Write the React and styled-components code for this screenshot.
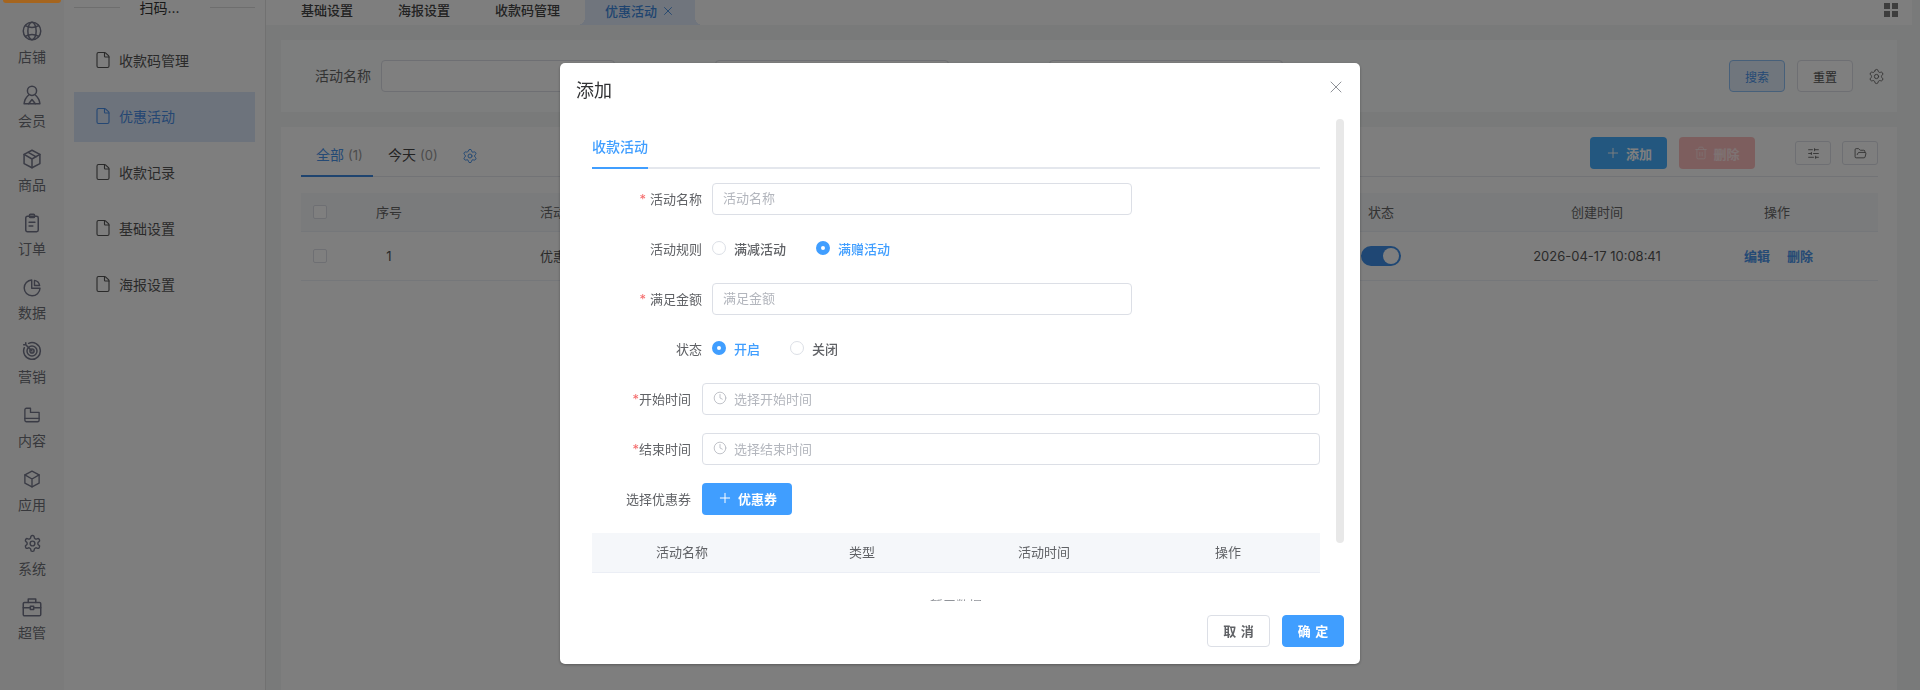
import styled, { createGlobalStyle } from 'styled-components';
import { File, Plus, X, Clock, Settings, Trash2, SlidersHorizontal, FolderOpen } from 'lucide-react';

const GlobalStyle = createGlobalStyle`
	html, body {
		margin: 0;
		padding: 0;
		height: 100%;
		overflow: hidden;
		background: #f2f4f4;
		font-family: Inter, "Noto Sans CJK SC", sans-serif;
		font-size: 13px;
		color: #606266;
	}
	* {
		box-sizing: border-box;
	}
`;

const Line = ({ size = 20, children }) => (
	<svg width={size} height={size} viewBox="0 0 24 24" fill="none" stroke="currentColor" strokeWidth="1.8" strokeLinecap="round" strokeLinejoin="round">
		{children}
	</svg>
);

const railItems = [
	{
		label: '店铺',
		icon: (
			<>
				<circle cx="12" cy="12" r="10.5" />
				<ellipse cx="12" cy="12" rx="5" ry="10.5" />
				<path d="M4 5.5Q12 10 20 5.5M4 18.5Q12 14 20 18.5" />
			</>
		),
	},
	{
		label: '会员',
		icon: (
			<>
				<circle cx="12" cy="7" r="5.5" />
				<path d="M8 12C5 14.5 3 18 2.5 22.5H21.5C21 18 19 14.5 16 12" />
				<path d="M8 22.5 12 17.5 16 22.5" />
			</>
		),
	},
	{
		label: '商品',
		icon: (
			<>
				<path d="M12 1.5 21.5 6.5V17.5L12 22.5 2.5 17.5V6.5Z" />
				<path d="M2.5 6.5 12 12 21.5 6.5M12 12V22.5M7.5 4 17 9.5" />
			</>
		),
	},
	{
		label: '订单',
		icon: (
			<>
				<rect x="4.5" y="4" width="15" height="18.5" rx="2" />
				<rect x="9" y="1.5" width="6" height="4" rx="1" />
				<path d="M8.5 11H15.5M8.5 15.5H13" />
			</>
		),
	},
	{
		label: '数据',
		size: 19,
		icon: (
			<>
				<path d="M11 2.5A10 10 0 1 0 21.5 13H11Z" />
				<path d="M14.5 3A8 8 0 0 1 21 9.5H14.5Z" />
			</>
		),
	},
	{
		label: '营销',
		icon: (
			<>
				<path d="M8 2.8A10 10 0 1 1 2.8 8" />
				<circle cx="12" cy="12" r="6" />
				<circle cx="12" cy="12" r="2.5" />
				<path d="M12 12 4.5 4.5M2 4.5H4.5V2" />
			</>
		),
	},
	{
		label: '内容',
		size: 18,
		icon: (
			<>
				<path d="M2.5 5A2 2 0 0 1 4.5 3H10V8.5H21.5V19A2 2 0 0 1 19.5 21H4.5A2 2 0 0 1 2.5 19Z" />
				<path d="M2.5 16.5H21.5" />
			</>
		),
	},
	{
		label: '应用',
		size: 18,
		icon: (
			<>
				<path d="M12 1.5 21.5 6.5V17.5L12 22.5 2.5 17.5V6.5Z" />
				<path d="M2.5 6.5 12 12 21.5 6.5M12 12V22.5" />
			</>
		),
	},
	{
		label: '系统',
		size: 19,
		icon: (
			<>
				<path d="M12.2 2h-.4a2 2 0 0 0-2 2v.2a2 2 0 0 1-1 1.7l-.4.3a2 2 0 0 1-2 0l-.2-.1a2 2 0 0 0-2.7.7l-.2.4a2 2 0 0 0 .7 2.7l.2.1a2 2 0 0 1 1 1.7v.5a2 2 0 0 1-1 1.7l-.2.1a2 2 0 0 0-.7 2.7l.2.4a2 2 0 0 0 2.7.7l.2-.1a2 2 0 0 1 2 0l.4.3a2 2 0 0 1 1 1.7v.2a2 2 0 0 0 2 2h.4a2 2 0 0 0 2-2v-.2a2 2 0 0 1 1-1.7l.4-.3a2 2 0 0 1 2 0l.2.1a2 2 0 0 0 2.7-.7l.2-.4a2 2 0 0 0-.7-2.7l-.2-.1a2 2 0 0 1-1-1.7v-.5a2 2 0 0 1 1-1.7l.2-.1a2 2 0 0 0 .7-2.7l-.2-.4a2 2 0 0 0-2.7-.7l-.2.1a2 2 0 0 1-2 0l-.4-.3a2 2 0 0 1-1-1.7V4a2 2 0 0 0-2-2Z" />
				<circle cx="12" cy="12" r="3" />
			</>
		),
	},
	{
		label: '超管',
		icon: (
			<>
				<rect x="1.5" y="6.5" width="21" height="16" rx="1.5" />
				<path d="M7.5 6.5V2.5H16.5V6.5M1.5 13H10M14 13H22.5" />
				<rect x="10" y="11" width="4" height="4" />
			</>
		),
	},
];

const menuItems = ['收款码管理', '优惠活动', '收款记录', '基础设置', '海报设置'];
const topTabs = ['基础设置', '海报设置', '收款码管理'];

export default function App() {
	return (
		<>
			<GlobalStyle />
			<Page>
				<Rail>
					<BrandPill />
					{railItems.map((item) => (
						<RailItem key={item.label}>
							<RailIcon>
								<Line size={item.size}>{item.icon}</Line>
							</RailIcon>
							{item.label}
						</RailItem>
					))}
				</Rail>
				<Sidebar>
					<SideHead>
						<SideRule />
						<SideTitle>扫码...</SideTitle>
						<SideRule />
					</SideHead>
					{menuItems.map((name) => (
						<MenuItem key={name} $active={name === '优惠活动'}>
							<File size={18} strokeWidth={1.5} />
							{name}
						</MenuItem>
					))}
				</Sidebar>
				<Main>
					<TabBar>
						{topTabs.map((name) => (
							<TopTab key={name}>{name}</TopTab>
						))}
						<ActiveTopTab>
							优惠活动
							<X size={14} strokeWidth={1.5} />
						</ActiveTopTab>
						<GridIcon width="14" height="14" viewBox="0 0 14 14" fill="currentColor">
							<rect x="0" y="0" width="6" height="6" />
							<rect x="8" y="0" width="6" height="6" />
							<rect x="0" y="8" width="6" height="6" />
							<rect x="8" y="8" width="6" height="6" />
						</GridIcon>
					</TabBar>

					<SearchPanel>
						<Filter>
							<FilterLabel>活动名称</FilterLabel>
							<FilterInput />
						</Filter>
						<Filter>
							<FilterLabel>活动规则</FilterLabel>
							<FilterInput />
						</Filter>
						<Filter>
							<FilterLabel>活动状态</FilterLabel>
							<FilterInput />
						</Filter>
						<SearchActions>
							<OutlineButton $primary>搜索</OutlineButton>
							<OutlineButton>重置</OutlineButton>
							<GearWrap>
								<Settings size={17} strokeWidth={1.3} />
							</GearWrap>
						</SearchActions>
					</SearchPanel>

					<ListPanel>
						<ListHead>
							<ListTab $active>
								全部 <Count>(1)</Count>
							</ListTab>
							<ListTab>
								今天 <Count>(0)</Count>
							</ListTab>
							<BlueGear>
								<Settings size={16} strokeWidth={1.5} />
							</BlueGear>
							<ListActions>
								<AddButton>
									<Plus size={16} strokeWidth={1.4} />
									添加
								</AddButton>
								<DeleteButton>
									<Trash2 size={14} strokeWidth={1.3} />
									删除
								</DeleteButton>
								<ToolButton>
									<SlidersHorizontal size={13} strokeWidth={1.5} />
								</ToolButton>
								<ToolButton>
									<FolderOpen size={13} strokeWidth={1.5} />
								</ToolButton>
							</ListActions>
						</ListHead>
						<TableHead>
							<CheckCell>
								<Checkbox />
							</CheckCell>
							<Cell>序号</Cell>
							<NameCell>活动名称</NameCell>
							<Cell>状态</Cell>
							<Cell>创建时间</Cell>
							<Cell>操作</Cell>
						</TableHead>
						<TableRow>
							<CheckCell>
								<Checkbox />
							</CheckCell>
							<Cell>1</Cell>
							<NameCell>优惠活动</NameCell>
							<Cell>
								<Switch />
							</Cell>
							<Cell>2026-04-17 10:08:41</Cell>
							<LinkCell>
								<RowLink>编辑</RowLink>
								<RowLink>删除</RowLink>
							</LinkCell>
						</TableRow>
					</ListPanel>
				</Main>

				<Overlay>
					<Modal>
						<ModalHeader>
							<ModalTitle>添加</ModalTitle>
							<CloseIcon size={20} strokeWidth={1.2} />
						</ModalHeader>
						<ModalBody>
							<FormTabs>
								<FormTab>收款活动</FormTab>
							</FormTabs>
							<Form>
								<Row>
									<Label>
										<Star $spaced>*</Star>活动名称
									</Label>
									<TextInput placeholder="活动名称" />
								</Row>
								<Row>
									<Label>活动规则</Label>
									<Radios>
										<RadioItem>
											<Radio />
											满减活动
										</RadioItem>
										<RadioItem $checked>
											<Radio $checked />
											满赠活动
										</RadioItem>
									</Radios>
								</Row>
								<Row>
									<Label>
										<Star $spaced>*</Star>满足金额
									</Label>
									<TextInput placeholder="满足金额" />
								</Row>
								<Row>
									<Label>状态</Label>
									<Radios>
										<RadioItem $checked>
											<Radio $checked />
											开启
										</RadioItem>
										<RadioItem>
											<Radio />
											关闭
										</RadioItem>
									</Radios>
								</Row>
								<Row>
									<ShortLabel>
										<Star>*</Star>开始时间
									</ShortLabel>
									<TimeInput>
										<Clock size={14} strokeWidth={1.4} />
										选择开始时间
									</TimeInput>
								</Row>
								<Row>
									<ShortLabel>
										<Star>*</Star>结束时间
									</ShortLabel>
									<TimeInput>
										<Clock size={14} strokeWidth={1.4} />
										选择结束时间
									</TimeInput>
								</Row>
								<Row>
									<ShortLabel>选择优惠券</ShortLabel>
									<CouponButton>
										<Plus size={16} strokeWidth={1.5} />
										优惠券
									</CouponButton>
								</Row>
							</Form>
							<CouponHead>
								<div>活动名称</div>
								<div>类型</div>
								<div>活动时间</div>
								<div>操作</div>
							</CouponHead>
							<Empty>暂无数据</Empty>
							<ScrollThumb />
						</ModalBody>
						<ModalFooter>
							<CancelButton>取 消</CancelButton>
							<ConfirmButton>确 定</ConfirmButton>
						</ModalFooter>
					</Modal>
				</Overlay>
			</Page>
		</>
	);
}

const Page = styled.div`
	display: flex;
	width: 1920px;
	height: 690px;
	overflow: hidden;
`;

const Rail = styled.nav`
	flex: 0 0 64px;
	background: #f7f7f7;
	display: flex;
	flex-direction: column;
	align-items: center;
`;
const BrandPill = styled.div`
	width: 58px;
	height: 3px;
	margin-bottom: 18px;
	background: #a5651f;
	border-radius: 0 0 12px 12px;
	position: relative;
	z-index: 20;
`;
const RailItem = styled.div`
	height: 64px;
	display: flex;
	flex-direction: column;
	align-items: center;
	gap: 7px;
	line-height: 18px;
	font-size: 14px;
	color: #6f7178;
`;
const RailIcon = styled.div`
	height: 20px;
	display: flex;
	align-items: center;
	color: #74778a;
`;

const Sidebar = styled.aside`
	flex: 0 0 202px;
	background: #fcfcfc;
	border-right: 1px solid #e2e2e2;
	padding: 0 10px;
`;
const SideHead = styled.div`
	display: flex;
	align-items: center;
	height: 16px;
	margin-bottom: 20px;
`;
const SideRule = styled.div`
	flex: 1;
	height: 1px;
	margin-top: -2px;
	background: #dcdcdc;
`;
const SideTitle = styled.div`
	flex: 0 0 90px;
	padding-left: 20px;
	font-size: 14px;
	line-height: 16px;
	color: #333;
`;
const MenuItem = styled.div`
	height: 50px;
	margin-bottom: 6px;
	padding: 0 0 2px 20px;
	display: flex;
	align-items: center;
	gap: 7px;
	font-size: 14px;
	color: ${(p) => (p.$active ? '#4a8ee6' : '#555')};
	background: ${(p) => (p.$active ? '#dbe6f8' : 'transparent')};
`;

const Main = styled.main`
	flex: 1;
	min-width: 0;
	background: #f2f5f4;
`;
const TabBar = styled.div`
	height: 25px;
	margin-right: 8px;
	padding-left: 15px;
	background: #fdfdfd;
	display: flex;
	align-items: center;
	gap: 5px;
`;
const TopTab = styled.div`
	padding: 0 20px;
	line-height: 21px;
	margin-bottom: 4px;
	font-size: 13px;
	font-weight: 500;
	color: #444;
`;
const ActiveTopTab = styled.div`
	position: relative;
	height: 25px;
	width: 110px;
	padding: 0 0 4px 20px;
	display: flex;
	align-items: center;
	gap: 4px;
	font-size: 13px;
	font-weight: 500;
	color: #3f89df;
	background: #e0ebfb;
	&::before,
	&::after {
		content: '';
		position: absolute;
		bottom: 0;
		width: 8px;
		height: 8px;
		background: radial-gradient(circle at 0 0, transparent 8px, #e0ebfb 8px);
	}
	&::before {
		left: -8px;
	}
	&::after {
		right: -8px;
		background: radial-gradient(circle at 100% 0, transparent 8px, #e0ebfb 8px);
	}
`;
const GridIcon = styled.svg`
	margin-left: auto;
	margin-right: 14px;
	margin-bottom: 6px;
	color: #7b7b7b;
`;

const SearchPanel = styled.section`
	margin: 15px 23px 0 15px;
	height: 72px;
	padding: 20px 12px 0 34px;
	background: #fbfcfc;
	display: flex;
	align-items: flex-start;
`;
const Filter = styled.div`
	width: 334px;
	display: flex;
	align-items: center;
	gap: 10px;
`;
const FilterLabel = styled.div`
	width: 56px;
	padding-bottom: 2px;
	font-size: 14px;
	color: #666;
`;
const FilterInput = styled.div`
	width: 234px;
	height: 32px;
	border: 1px solid #dcdfe6;
	border-radius: 4px;
	background: #fff;
`;
const SearchActions = styled.div`
	margin-left: auto;
	display: flex;
	align-items: center;
	gap: 12px;
`;
const OutlineButton = styled.div`
	width: 56px;
	height: 32px;
	border-radius: 4px;
	font-size: 12px;
	display: flex;
	align-items: center;
	justify-content: center;
	color: ${(p) => (p.$primary ? '#4a94ea' : '#555')};
	background: ${(p) => (p.$primary ? '#e1edfb' : '#fff')};
	border: 1px solid ${(p) => (p.$primary ? '#8fc1f5' : '#dcdfe6')};
`;
const GearWrap = styled.div`
	display: flex;
	margin-left: 3px;
	color: #666;
`;

const ListPanel = styled.section`
	margin: 15px 23px 0 15px;
	height: 563px;
	padding: 0 19px 0 20px;
	background: #fdfdfd;
`;
const ListHead = styled.div`
	height: 50px;
	display: flex;
	align-items: flex-start;
	border-bottom: 1px solid #e4e7ed;
`;
const ListTab = styled.div`
	height: 50px;
	width: ${(p) => (p.$active ? '72px' : 'auto')};
	margin-right: ${(p) => (p.$active ? '15px' : '24px')};
	padding: 18px 0 0 ${(p) => (p.$active ? '15px' : '0')};
	line-height: 20px;
	font-size: 14px;
	white-space: nowrap;
	color: ${(p) => (p.$active ? '#4a94ea' : '#444')};
	border-bottom: 2px solid ${(p) => (p.$active ? '#3f89df' : 'transparent')};
`;
const Count = styled.span`
	font-size: 13px;
	color: #999;
`;
const BlueGear = styled.div`
	margin-top: 21px;
	color: #4a94ea;
	display: flex;
`;
const ListActions = styled.div`
	margin-left: auto;
	margin-top: 10px;
	display: flex;
	align-items: center;
`;
const FilledButton = styled.div`
	height: 32px;
	width: 77px;
	margin-right: 12px;
	border-radius: 4px;
	display: flex;
	align-items: center;
	justify-content: center;
	gap: 5px;
	font-size: 13px;
	font-weight: 700;
	color: #fff;
`;
const AddButton = styled(FilledButton)`
	background: #46aeff;
`;
const DeleteButton = styled(FilledButton)`
	width: 76px;
	background: #fabdbd;
	margin-right: 40px;
	color: #fde7e7;
`;
const ToolButton = styled.div`
	width: 36px;
	height: 24px;
	margin-left: 11px;
	border: 1px solid #dcdfe6;
	border-radius: 3px;
	display: flex;
	align-items: center;
	justify-content: center;
	color: #555;
	&:nth-of-type(3) {
		margin-left: 0;
	}
`;

const tableCols = '40px 96px 807px 274px 158px 202px';
const TableHead = styled.div`
	margin-top: 16px;
	height: 39px;
	padding-bottom: 1px;
	display: grid;
	grid-template-columns: ${tableCols};
	align-items: center;
	text-align: center;
	background: #f4f6f9;
	border-bottom: 1px solid #ebeef5;
	color: #666;
`;
const TableRow = styled(TableHead)`
	margin-top: 0;
	height: 49px;
	background: transparent;
	color: #555;
`;
const Cell = styled.div`
	display: flex;
	align-items: center;
	justify-content: center;
	gap: 17px;
`;
const LinkCell = styled(Cell)`
	padding-left: 3px;
`;
const CheckCell = styled.div`
	padding-left: 12px;
	display: flex;
`;
const NameCell = styled.div`
	text-align: left;
	padding-left: 103px;
`;
const Checkbox = styled.span`
	width: 14px;
	height: 14px;
	border: 1px solid #dcdfe6;
	border-radius: 2px;
	background: #fff;
`;
const Switch = styled.span`
	position: relative;
	width: 40px;
	height: 20px;
	border-radius: 10px;
	background: #3f8fe8;
	&::after {
		content: '';
		position: absolute;
		top: 2px;
		right: 2px;
		width: 16px;
		height: 16px;
		border-radius: 50%;
		background: #fff;
	}
`;
const RowLink = styled.span`
	font-weight: 600;
	color: #4a94ea;
`;

const Overlay = styled.div`
	position: fixed;
	inset: 0;
	z-index: 10;
	padding-top: 63px;
	display: flex;
	align-items: flex-start;
	justify-content: center;
	background: rgba(0, 0, 0, 0.5);
`;
const Modal = styled.div`
	width: 800px;
	height: 601px;
	background: #fff;
	border-radius: 5px;
	box-shadow: 0 1px 3px rgba(0, 0, 0, 0.3);
	display: flex;
	flex-direction: column;
`;
const ModalHeader = styled.div`
	flex: 0 0 56px;
	padding: 12px 14px 0 16px;
	display: flex;
	justify-content: space-between;
	align-items: flex-start;
`;
const ModalTitle = styled.div`
	font-size: 18px;
	line-height: 32px;
	color: #303133;
`;
const CloseIcon = styled(X)`
	color: #8f9298;
	margin-top: 2px;
`;
const ModalBody = styled.div`
	position: relative;
	flex: 0 0 482px;
	overflow: hidden;
	padding: 10px 40px 0 32px;
`;
const ScrollThumb = styled.div`
	position: absolute;
	top: 0;
	right: 16px;
	width: 8px;
	height: 424px;
	border-radius: 4px;
	background: #e8e8e8;
`;
const FormTabs = styled.div`
	height: 40px;
	border-bottom: 2px solid #e4e7ed;
`;
const FormTab = styled.div`
	display: inline-block;
	height: 40px;
	line-height: 36px;
	font-size: 14px;
	font-weight: 500;
	color: #409eff;
	border-bottom: 2px solid #409eff;
`;
const Form = styled.div`
	margin-top: 14px;
	display: flex;
	flex-direction: column;
	gap: 18px;
`;
const Row = styled.div`
	height: 32px;
	display: flex;
	align-items: center;
`;
const Label = styled.div`
	flex: 0 0 110px;
	margin-right: 10px;
	padding-bottom: 2px;
	text-align: right;
	color: #606266;
	white-space: nowrap;
`;
const ShortLabel = styled(Label)`
	flex: 0 0 99px;
	margin-right: 11px;
`;
const Star = styled.span`
	color: #f56c6c;
	margin-right: ${(p) => (p.$spaced ? '4px' : '0')};
`;
const TextInput = styled.input`
	width: 420px;
	height: 32px;
	padding: 0 10px 2px;
	border: 1px solid #dcdfe6;
	border-radius: 4px;
	outline: none;
	font: inherit;
	font-size: 13px;
	&::placeholder {
		color: #b3b6bd;
	}
`;
const TimeInput = styled.div`
	flex: 1;
	height: 32px;
	padding: 0 0 2px 10px;
	border: 1px solid #dcdfe6;
	border-radius: 4px;
	display: flex;
	align-items: center;
	gap: 7px;
	color: #b3b6bd;
`;
const Radios = styled.div`
	display: flex;
	align-items: center;
	gap: 30px;
	padding-bottom: 2px;
`;
const RadioItem = styled.div`
	display: flex;
	align-items: center;
	gap: 8px;
	font-weight: 500;
	color: ${(p) => (p.$checked ? '#409eff' : '#606266')};
`;
const Radio = styled.span`
	width: 14px;
	height: 14px;
	border-radius: 50%;
	background: #fff;
	border: ${(p) => (p.$checked ? '5px solid #409eff' : '1px solid #dcdfe6')};
`;
const CouponButton = styled.div`
	width: 90px;
	height: 32px;
	padding-bottom: 2px;
	border-radius: 4px;
	background: #409eff;
	color: #fff;
	font-weight: 700;
	display: flex;
	align-items: center;
	justify-content: center;
	gap: 5px;
`;
const CouponHead = styled.div`
	margin-top: 18px;
	height: 40px;
	padding-bottom: 2px;
	display: grid;
	grid-template-columns: 180px 180px 184px 184px;
	align-items: center;
	text-align: center;
	background: #f5f7fa;
	border-bottom: 1px solid #ebeef5;
	color: #606266;
`;
const Empty = styled.div`
	padding-top: 22px;
	text-align: center;
	color: #909399;
`;
const ModalFooter = styled.div`
	flex: 1;
	padding: 14px 16px 0 0;
	display: flex;
	justify-content: flex-end;
	gap: 12px;
`;
const CancelButton = styled.div`
	width: 63px;
	height: 32px;
	padding-bottom: 2px;
	border: 1px solid #dcdfe6;
	border-radius: 4px;
	display: flex;
	align-items: center;
	justify-content: center;
	font-weight: 600;
	word-spacing: 1px;
	color: #606266;
`;
const ConfirmButton = styled(CancelButton)`
	width: 62px;
	border-color: #409eff;
	background: #409eff;
	color: #fff;
`;
